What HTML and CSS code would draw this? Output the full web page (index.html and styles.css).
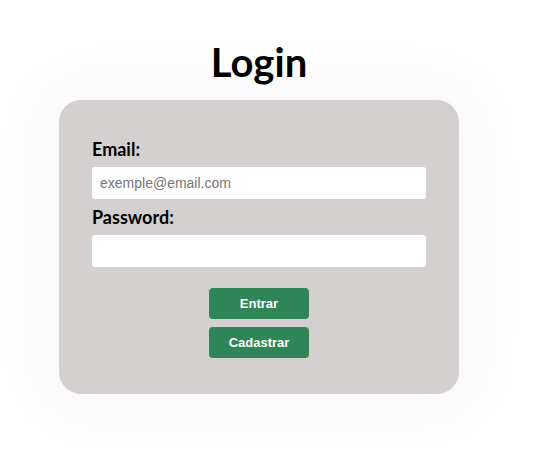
FILE: index.html
```html
<!DOCTYPE html>
<html lang="pt">
<head>
<meta charset="utf-8">
<title>Login</title>
<link rel="stylesheet" href="styles.css">
</head>
<body>
<main class="page">
  <h1 class="title">Login</h1>
  <form class="card">
    <label class="label" for="email">Email:</label>
    <input class="field" id="email" type="email" placeholder="exemple@email.com">
    <label class="label label-pass" for="password">Password:</label>
    <input class="field" id="password" type="password">
    <div class="actions">
      <button class="btn" type="button">Entrar</button>
      <button class="btn" type="button">Cadastrar</button>
    </div>
  </form>
</main>
</body>
</html>
```
FILE: styles.css
```css
html, body {
  margin: 0;
  padding: 0;
  background: #ffffff;
}

.page {
  display: flex;
  flex-direction: column;
  align-items: center;
  box-sizing: border-box;
  min-height: 453px;
  padding-top: 36px;
  width: 518px;
  font-family: "Lato", "Noto Sans", sans-serif;
}

.title {
  margin: 0 0 12px;
  font-size: 40px;
  line-height: 52px;
  font-weight: 700;
  color: #000;
}

.card {
  width: 400px;
  box-sizing: border-box;
  padding: 37px 33px 36px;
  background: #d4d0cf;
  border-radius: 22px;
  box-shadow: 0 0 60px 20px rgba(0, 0, 0, 0.035);
  display: flex;
  flex-direction: column;
}

.label {
  font-size: 18px;
  line-height: 24px;
  font-weight: 700;
  color: #000;
  margin-bottom: 6px;
}

.label-pass {
  margin-top: 6px;
}

.field {
  height: 32px;
  box-sizing: border-box;
  border: none;
  border-radius: 3px;
  background: #fff;
  padding: 0 8px;
  font-family: "Liberation Sans", Arial, sans-serif;
  font-size: 14px;
  color: #000;
  outline: none;
}

.field::placeholder {
  color: #757575;
}

.actions {
  display: flex;
  flex-direction: column;
  align-items: center;
  gap: 8px;
  margin-top: 21px;
}

.btn {
  width: 100px;
  height: 31px;
  border: none;
  border-radius: 4px;
  background: #2e8557;
  color: #fff;
  font-family: "Liberation Sans", Arial, sans-serif;
  font-size: 13px;
  font-weight: 700;
  cursor: pointer;
}
```
